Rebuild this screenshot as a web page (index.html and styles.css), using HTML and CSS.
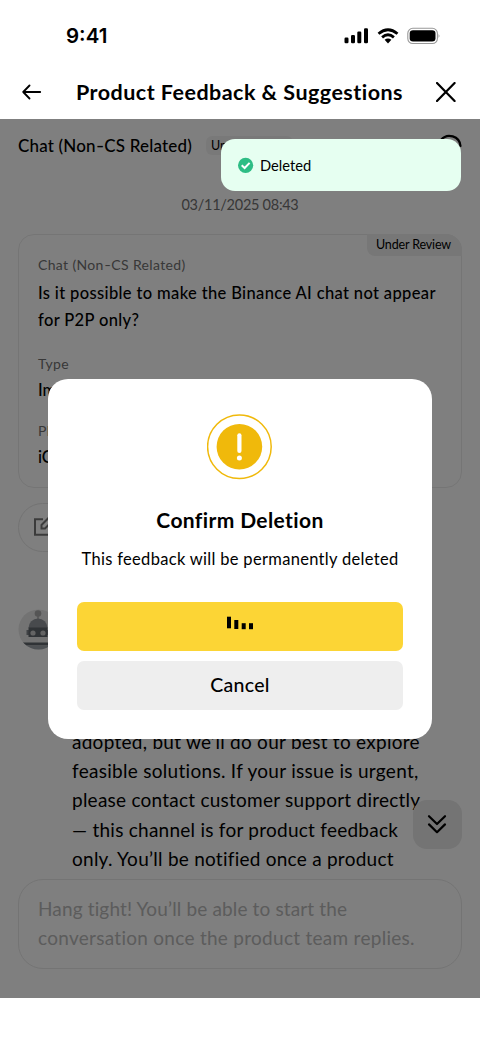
FILE: index.html
```html
<!DOCTYPE html>
<html lang="en">
<head>
<meta charset="utf-8">
<meta name="viewport" content="width=device-width, initial-scale=1">
<title>Product Feedback &amp; Suggestions</title>
<link rel="stylesheet" href="styles.css">
</head>
<body>
<div class="phone">
  <div class="status">
    <span class="clock">9:41</span>
    <div class="status-icons">
      <svg width="25" height="16" viewBox="0 0 25 16"><rect x="0.5" y="9.5" width="4" height="5.8" rx="1.2"/><rect x="7" y="7" width="4" height="8.3" rx="1.2"/><rect x="13.3" y="3.6" width="4" height="11.7" rx="1.2"/><rect x="20" y="0.3" width="4" height="15" rx="1.2"/></svg>
      <svg class="wifi" width="22" height="16" viewBox="0 0 22 16"><path d="M1.5 5.7Q11-2.3 20.5 5.7M5.1 9.4Q11 4.2 16.9 9.4" fill="none" stroke="#000" stroke-width="2.8"/><path d="M7.6 11.8Q11 9.2 14.4 11.8L11 15.4Z"/></svg>
      <svg class="battery" width="34" height="18" viewBox="0 0 34 18"><rect x="0.8" y="1.3" width="29.6" height="15.2" rx="5" fill="none" stroke="#999" stroke-width="1.1"/><rect x="2.7" y="3.2" width="25.8" height="11.4" rx="3.3"/><path d="M31.6 6.8Q33.3 8.9 31.6 11Z" fill="#888"/></svg>
    </div>
  </div>
  <header class="header">
    <svg width="20" height="16" viewBox="0 0 20 16"><path d="M7.5 1.5L1.2 8L7.5 14.5M1.2 8H18.2" class="line"/></svg>
    <h1>Product Feedback &amp; Suggestions</h1>
    <svg width="20" height="20" viewBox="0 0 20 20"><path d="M1 1L18.6 19M18.6 1L1 19" class="line close"/></svg>
  </header>
  <main class="content">
    <div class="topic">
      <strong>Chat (Non<span class="dash">-</span>CS Related)</strong>
      <span class="badge">Under Review</span>
      <svg class="history" width="24" height="24" viewBox="0 0 24 24"><path d="M3 7A11 11 0 0 1 22.5 13M2 13A10 10 0 0 0 20 19" class="line close"/></svg>
    </div>
    <time class="date">03/11/2025 08:43</time>
    <section class="card">
      <span class="tag">Under Review</span>
      <div class="label">Chat (Non<span class="dash">-</span>CS Related)</div>
      <div class="question"><span>Is it possible to make the Binance AI chat not appear</span><br><span>for P2P only?</span></div>
      <div class="label">Type</div>
      <div class="value">Improvement</div>
      <div class="label">Platform</div>
      <div class="value">iOS</div>
    </section>
    <div class="edit">
      <svg width="20" height="20" viewBox="0 0 20 20"><path d="M10 2.2H2V17.8H18V10M8.5 11.5V8L15 1.5L18.5 5L12 11.5Z" fill="none" stroke="#777" stroke-width="2"/></svg>
    </div>
    <div class="reply">
      <svg width="42" height="42" viewBox="0 0 42 42">
        <clipPath id="disc"><circle cx="20.5" cy="20.5" r="20"/></clipPath>
        <circle cx="20.5" cy="20.5" r="20" fill="#e6e6e6"/>
        <g clip-path="url(#disc)"><circle cx="20" cy="4.5" r="3.3" fill="#aaa"/><path d="M20 7V11" stroke="#aaa" stroke-width="1.5"/><path d="M10.5 19A9.5 9.5 0 0 1 29.5 19Z" fill="#90959b"/><rect x="8.5" y="21" width="23" height="5" fill="#80858a"/><rect x="10.5" y="18.5" width="19" height="9.5" fill="#60666c"/><circle cx="15" cy="24" r="2.6" fill="#c8c8c8"/><circle cx="25" cy="24" r="2.6" fill="#c8c8c8"/><path d="M5 33.5H37V36.5H5Z" fill="#60666c"/><path d="M6 36.5H36V42H6Z" fill="#9da2a8"/></g>
      </svg>
      <p class="message"><span class="m1">adopted, but we’ll do our best to explore</span><br><span class="m2">feasible solutions. If your issue is urgent,</span><br><span class="m3">please contact customer support directly</span><br><span>— this channel is for product feedback</span><br><span>only. You’ll be notified once a product</span></p>
    </div>
    <div class="composer"><span class="c1">Hang tight! You’ll be able to start the</span><br><span>conversation once the product team replies.</span></div>
    <div class="scroll-down">
      <svg width="20" height="20" viewBox="0 0 20 20"><path d="M2 2.2L10 10L18 2.2M2 10.4L10 18.2L18 10.4" class="line chev"/></svg>
    </div>
    <div class="scrim"></div>
  </main>
  <div class="toast">
    <svg width="16" height="16" viewBox="0 0 16 16"><circle cx="7.6" cy="8.3" r="7.6" fill="#2ebd85"/><path d="M3.7 8.3L6.6 11L11.6 5.9" fill="none" stroke="#fff" stroke-width="2"/></svg>
    <span>Deleted</span>
  </div>
  <div class="modal">
    <svg width="66" height="66" viewBox="0 0 66 66"><circle cx="32.4" cy="32.7" r="31.8" fill="none" stroke="#f0b90b" stroke-width="1.5"/><circle cx="32.4" cy="32.7" r="22.8" fill="#f0b90b"/><path d="M32.4 21.3V37" stroke="#fff" stroke-width="4.2" stroke-linecap="round"/><circle cx="32.4" cy="43.9" r="2.5" fill="#fff"/></svg>
    <h2>Confirm Deletion</h2>
    <p>This feedback will be permanently deleted</p>
    <button class="confirm" aria-label="Deleting"><svg width="28" height="14" viewBox="0 0 28 14"><rect x="1" y="0.7" width="4" height="11.6"/><rect x="8.3" y="4" width="4" height="9"/><rect x="15.7" y="7.2" width="4" height="6"/><rect x="23" y="7.2" width="4" height="6"/></svg></button>
    <button class="cancel">Cancel</button>
  </div>
</div>
</body>
</html>
```
FILE: styles.css
```css
* { box-sizing: border-box; }
body { margin: 0; background: #fff; color: #000; font-family: Lato, "Open Sans", sans-serif; font-variant-ligatures: none; }
h1, h2, p { margin: 0; }
svg { display: block; flex: none; }
.phone { position: relative; width: 480px; height: 1040px; overflow: hidden; white-space: nowrap; }
.status { display: flex; justify-content: space-between; height: 65px; padding: 24px 39px 0 66px; }
.clock { font: 600 20.5px/24px Inter, sans-serif; }
.status-icons { display: flex; padding-top: 4px; }
.wifi { margin-left: 8px; }
.battery { margin: -1px 0 0 8px; }
.header { display: flex; align-items: center; justify-content: space-between; height: 54px; padding: 0 24px 0 22px; }
.header h1 { padding-left: 1px; font-size: 21.5px; line-height: 28px; font-weight: 700; letter-spacing: 0.47px; }
.line { fill: none; stroke: #000; stroke-width: 1.8; stroke-linecap: round; stroke-linejoin: round; }
.close { stroke-width: 2.2; }
.content { position: relative; display: flex; flex-direction: column; height: 879px; padding: 0 18px 29px; }
.scrim { position: absolute; inset: 0; background: rgba(0, 0, 0, 0.5); }
.topic { display: flex; align-items: center; height: 52px; }
.topic strong { font-size: 17px; font-weight: 500; letter-spacing: 0.18px; }
.dash { display: inline-block; transform: scaleX(1.3); margin: 0 1px; }
.badge { margin-left: 14px; padding: 0 5px; font-size: 12.5px; line-height: 19px; border-radius: 6px; background: #f3f3f3; }
.history { margin-left: auto; }
.date { height: 63px; padding-top: 23px; text-align: center; font-size: 14.5px; line-height: 22px; letter-spacing: -0.27px; color: #707070; }
.card { position: relative; height: 254px; padding: 19px 19px; border: 1px solid #ebebeb; border-radius: 16px; }
.tag { position: absolute; top: -1px; right: -1px; width: 95px; height: 22px; padding-left: 9px; font-size: 12.5px; line-height: 22px; letter-spacing: -0.15px; background: #eee; border-radius: 0 16px 0 8px; }
.label { font-size: 14px; line-height: 21px; letter-spacing: 0.35px; color: #707070; }
.question { margin: 5px 0 19px; font-size: 16.5px; line-height: 27px; font-weight: 500; letter-spacing: 0.36px; }
.value { height: 27px; margin: 3px 0 16px; font-size: 16.5px; line-height: 27px; font-weight: 500; }
.edit { width: 76px; height: 49px; margin-top: 15px; padding: 13px 14px; border: 1px solid #e6e6e6; border-radius: 25px; }
.reply { display: flex; gap: 12px; margin-top: 57px; }
.message { padding-top: 118px; font-size: 19px; line-height: 29.2px; letter-spacing: 0.25px; }
.message .m1 { letter-spacing: 0.27px; }
.message .m2 { letter-spacing: 0.29px; }
.message .m3 { letter-spacing: 0.24px; }
.composer { margin-top: auto; height: 90px; padding: 14px 19px; border: 1px solid #e8e8e8; border-radius: 25px; font-size: 19px; line-height: 29px; letter-spacing: 0.28px; color: #b8b8b8; }
.composer .c1 { letter-spacing: 0.14px; }
.scroll-down { position: absolute; right: 18px; bottom: 149px; width: 49px; height: 49px; padding: 14px; border-radius: 14px; background: #e8e8e8; }
.chev { stroke-width: 2.2; }
.toast { position: absolute; left: 221px; top: 139px; width: 240px; height: 52px; padding: 0 17px; display: flex; align-items: center; gap: 6px; border-radius: 14px; background: #e6fff1; font-size: 14.7px; }
.modal { position: absolute; left: 48px; top: 379px; width: 384px; height: 360px; padding: 35px 29px; display: flex; flex-direction: column; align-items: center; border-radius: 20px; background: #fff; }
.modal h2 { margin-top: 26px; font-size: 21px; line-height: 28px; font-weight: 700; letter-spacing: 0.38px; }
.modal p { margin-top: 14px; font-size: 16.5px; line-height: 22px; letter-spacing: 0.31px; }
.modal button { width: 326px; height: 49px; border: 0; border-radius: 7px; flex: none; font: 500 19.5px Lato, sans-serif; letter-spacing: 0.3px; color: #000; }
.confirm { display: flex; justify-content: center; margin-top: 32px; padding: 14px 0 0; background: #fcd535; }
.modal .cancel { margin-top: 10px; padding: 0 0 3px; background: #eee; }
```
